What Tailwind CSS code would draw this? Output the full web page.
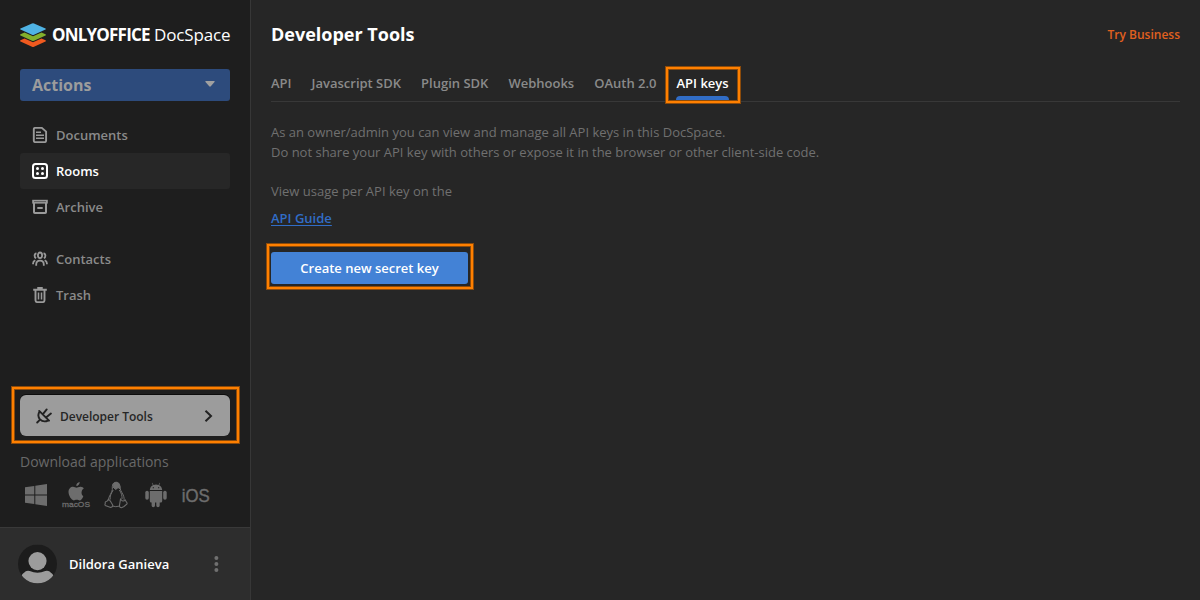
<!DOCTYPE html>
<html lang="en">
<head>
<meta charset="utf-8">
<title>Developer Tools</title>
<script src="https://cdn.jsdelivr.net/npm/@tailwindcss/browser@4"></script>
</head>
<body class="bg-[#262626] font-['Open_Sans','Noto_Sans',sans-serif] overflow-hidden">
<div class="flex w-[1200px] h-[600px] whitespace-nowrap">
  <aside class="flex flex-col w-[251px] h-full bg-[#1e1e1e] border-r border-[#373737] shrink-0">
    <div class="flex items-center h-[69px] pl-5 text-white text-[17px] leading-6">
      <svg class="w-[26px] h-6 mr-[6px] shrink-0" viewBox="0 0 26 24">
        <path fill="#f05a1f" d="M.5 17.300 4.500 15.500 13 19.200l8.500-3.700 4 1.800q.8.600 0 1.100L14 23.700q-1 .5-2 0L.5 18.400q-.8-.5 0-1.100z"/>
        <path fill="#83b02c" d="M.5 11.300 4.500 9.500 13 13.200l8.500-3.700 4 1.800q.8.600 0 1.100L14 17.700q-1 .5-2 0L.5 12.400q-.8-.5 0-1.100z"/>
        <path fill="#4fb3e4" d="M.5 5.400 12 .4q1-.5 2 0l11.500 5q.8.600 0 1.200L14 11.700q-1 .5-2 0L.5 6.600q-.8-.6 0-1.200z"/>
      </svg>
      <span class="font-bold tracking-[-0.8px] w-[102px]">ONLYOFFICE</span><span class="text-[17px] tracking-[-0.15px]">DocSpace</span>
    </div>
    <button class="flex items-center justify-between mx-5 h-8 rounded-[3px] bg-[#2d4b7c] pl-3 pr-[15px] text-[#9c9c9c] font-bold text-[16px] shrink-0">
      <span>Actions</span>
      <svg class="w-[10px] h-[6px] mb-[3px]" viewBox="0 0 10 6"><path fill="#a0a0a0" d="M.8 0h8.400q.8.200.3 1L5.800 5.300q-.8.800-1.600 0L.5 1Q0 .2.800 0z"/></svg>
    </button>
    <nav class="flex flex-col mt-4 mx-5 text-[13px] font-semibold text-[#8a8a8a]">
      <a class="flex items-center gap-2 h-9 pl-3">
        <svg class="w-4 h-4" viewBox="0 0 16 16" fill="none" stroke="#9a9a9a" stroke-width="1.900"><path d="M3.200.9h6.600l4.300 3.700v9.100q0 1.400-1.400 1.400H3.200q-1.400 0-1.400-1.400V2.300Q1.800.9 3.200.9z"/><path d="M4 5.300h5M4 8.200h8M4 11.200h8" stroke-width="1.600"/></svg>
        <span class="pt-[2px]">Documents</span></a>
      <a class="flex items-center gap-2 h-9 pl-3 rounded-[3px] bg-[#272727] text-white">
        <svg class="w-4 h-4" viewBox="0 0 16 16" fill="#fff"><rect x="1" y="1" width="14" height="14" rx="2.500" fill="none" stroke="#fff" stroke-width="2"/><circle cx="5.500" cy="5.500" r="1.500"/><circle cx="10.500" cy="5.500" r="1.500"/><circle cx="5.500" cy="10.500" r="1.500"/><circle cx="10.500" cy="10.500" r="1.500"/></svg>
        <span class="pt-[2px]">Rooms</span></a>
      <a class="flex items-center gap-2 h-9 pl-3">
        <svg class="w-4 h-4" viewBox="0 0 16 16" fill="none" stroke="#9a9a9a" stroke-width="2"><path stroke-width="3.800" d="M.2 2.700h15.600"/><path stroke="#1e1e1e" stroke-width=".5" d="M2 2.600h12"/><path d="M2 4v9.300q0 .8.800.8h10.400q.8 0 .8-.8V4M5.300 9h5.400"/></svg>
        <span class="pt-[2px]">Archive</span></a>
      <a class="flex items-center gap-2 h-9 pl-3 mt-4">
        <svg class="w-4 h-4" viewBox="0 0 16 16" fill="none" stroke="#9a9a9a" stroke-width="1.800"><ellipse cx="8" cy="4.300" rx="2.100" ry="2.800"/><path d="M4.200 14.800v-1.200q0-4 3.800-4t3.800 4v1.200M4.500 2.300Q2.600 2.600 2.600 4.700q0 1.800 1.500 2.600M11.500 2.300q1.900.3 1.900 2.400 0 1.800-1.500 2.600M1.100 13.200v-1q0-2 2.200-3M14.900 13.200v-1q0-2-2.200-3"/></svg>
        <span class="pt-[2px]">Contacts</span></a>
      <a class="flex items-center gap-2 h-9 pl-3">
        <svg class="w-4 h-4" viewBox="0 0 16 16" fill="none" stroke="#9a9a9a" stroke-width="1.900"><path d="M1.200 2.700h13.600M6.200 2V1h3.600v1M3.500 3.300v9.900q0 1.900 1.900 1.900h5.200q1.900 0 1.900-1.900V3.300"/><path stroke-width="1.500" d="M6.500 5.600v7M9.500 5.600v7"/></svg>
        <span class="pt-[2px]">Trash</span></a>
    </nav>
    <div class="relative mt-[82px] mx-5 pb-px">
      <a class="flex items-center h-[41px] rounded-md bg-[#9c9c9c] text-[#262626] text-[12px] font-semibold pl-4 pr-[17px] shadow-[0_-1px_0_0_#0c0c0c]">
        <svg class="w-4 h-4 mr-2" viewBox="0 0 16 16" fill="none" stroke="#222" stroke-width="1.900" stroke-linecap="round"><path d="M3.200 2.900 13 12.700M3.600 3.500C2 6 2 9 4 11.300c2.200 2.300 5.500 2.500 8.300 1M3.800 11.900l-2.600 2.600M7.500 5.400l3.200-4M10.900 8.800l4-3.200"/></svg>
        <span class="pt-[3px] tracking-[-0.02px]">Developer Tools</span>
        <svg class="w-[9px] h-3 ml-auto" viewBox="0 0 9 12" fill="none" stroke="#222" stroke-width="2"><path d="M1.500.8 7 6l-5.500 5.200"/></svg>
      </a>
      <div class="absolute left-[-8px] top-[-8px] w-[227px] h-[56px] border-2 border-[#ff8000] shadow-[0_0_0_1px_#8c4b0b,inset_0_0_0_1px_#8c4b0b]"></div>
    </div>
    <p class="mt-[15px] ml-5 text-[14px] leading-5 text-[#696969]">Download applications</p>
    <div class="flex items-center mt-[7px] ml-5 gap-2 h-8 text-[#6d6d6d]">
      <svg class="w-8 h-8" viewBox="0 0 32 32" fill="currentColor"><path d="M5 8.200 14.300 6.900v8.500H5zM15.300 6.700 27 5v10.400H15.300zM5 16.400h9.300v8.600L5 23.700zM15.300 16.400H27V26.900l-11.700-1.700z"/></svg>
      <svg class="w-8 h-8" viewBox="0 0 32 32" fill="currentColor"><path d="M19.700 3c.1 2.200-1.500 3.900-3.400 4-.2-2 1.500-3.800 3.400-4zM23.300 17.200c-.9 2.500-2.300 4.200-3.700 4.200-1 0-1.500-.6-2.900-.6s-2 .6-2.900.6c-2.400 0-5.300-5-5.300-8.300 0-3.400 2.200-5.400 4.500-5.400 1.500 0 2.600 1 3.500 1s2.300-1.100 4.200-1c1.500.1 2.500.7 3.100 1.700-3.100 1.900-2.700 6.200-.5 7.800z"/><text x="2" y="27.500" font-family="Liberation Sans, sans-serif" font-size="8" stroke="currentColor" stroke-width=".3" textLength="28" lengthAdjust="spacingAndGlyphs">macOS</text></svg>
      <svg class="w-8 h-8" viewBox="0 0 32 32" fill="none" stroke="currentColor" stroke-width="1"><path d="M12.300 10.500V7.500q0-4 3.700-4t4 4c0 4 1.500 4.700 3.200 8.500 1.100 2.500 1 4 .8 5.400M12.300 10.500c0 3-3.700 6.500-4.100 11"/><path fill="currentColor" d="M13 5.500Q14 3.200 16 3.200q3.500 0 3.900 4.300l-.2 2.500-1.800-1.800-2 1.800-2.600-1.800z"/><path d="M13 8l2.700 2.500L19 8M13.200 11c-2 3.500-3.500 6-3 9.500M19.300 11c2 2.500 3 6 2.700 9M12.500 27q3 1.400 7.300 0"/><path d="M8.300 20.500q1.200-.2 2.800 2.800l1.600 2.800q.4 2-2 2.300l-5.400-1.900q-.8-.8 0-2.200-.4-1.700 1-1.800 1.300-.3 2-2zM20.500 20.200q-.5 3-1 6-.1 2.500 2 2.500l2.500-1.200 3-2.500q.5-.9-.5-1.800l-1.300-2.200q-1.200 1.500-3 .8z" stroke-width="1.100"/></svg>
      <svg class="w-8 h-8" viewBox="0 0 32 32" fill="currentColor"><path d="M9.800 12h12.400v10q0 1.500-1.500 1.500h-1v3.100a1.700 1.700 0 0 1-3.400 0v-3.100h-1.300v3.100a1.700 1.700 0 0 1-3.400 0v-3.100h-.3q-1.500 0-1.500-1.500zM9.800 11.100c.2-2.500 1.300-4 3.100-4.900l-1.100-2.200.5-.3 1.200 2.200q2.500-.9 5 0L19.700 3.700l.5.3-1.100 2.200c1.800.9 2.900 2.400 3.100 4.900z"/><rect x="5.300" y="11.700" width="3.500" height="9" rx="1.700"/><rect x="23.200" y="11.700" width="3.500" height="9" rx="1.700"/><circle cx="13.300" cy="8.700" r=".6" fill="#1e1e1e"/><circle cx="18.700" cy="8.700" r=".6" fill="#1e1e1e"/></svg>
      <svg class="w-8 h-8" viewBox="0 0 32 32" fill="currentColor"><text x="1.800" y="22.500" font-family="Liberation Sans, sans-serif" font-size="18" stroke="currentColor" stroke-width=".4" textLength="28" lengthAdjust="spacingAndGlyphs">iOS</text></svg>
    </div>
    <div class="flex items-center mt-auto h-[73px] bg-[#2d2d2d] border-t border-[#393939] pl-[18px] pr-7">
      <svg class="w-[39px] h-10 mr-3" viewBox="0 0 40 40"><defs><clipPath id="avatar"><circle cx="20" cy="20" r="20"/></clipPath></defs><g clip-path="url(#avatar)"><rect width="40" height="40" fill="#1c1c1c"/><circle cx="20" cy="17" r="9.300" fill="#9c9c9c"/><path fill="#9c9c9c" d="M3 40q-2-8 5-12.500 2-1 4-.2 8 3.400 16 0 2-.8 4 .2 7 4.500 5 12.500z"/></g></svg>
      <span class="text-white text-[13px] font-semibold pt-[2px]">Dildora Ganieva</span>
      <svg class="w-4 h-4 ml-auto mr-[-2px]" viewBox="0 0 16 16" fill="#707070"><circle cx="8.400" cy="2" r="2"/><circle cx="8.400" cy="8" r="2"/><circle cx="8.400" cy="14" r="2"/></svg>
    </div>
  </aside>
  <main class="flex-1 pl-5 pr-5">
    <header class="flex items-center justify-between h-[69px]">
      <h1 class="text-white font-bold text-[18px]">Developer Tools</h1>
      <a class="text-[#e0601f] text-[12px] font-semibold">Try Business</a>
    </header>
    <div class="flex gap-5 h-[33px] border-b border-[#383838] text-[13px] font-semibold leading-[29px] text-[#8a8a8a]">
      <span>API</span><span>Javascript SDK</span><span>Plugin SDK</span><span>Webhooks</span><span>OAuth 2.0</span>
      <span class="relative text-white">API keys
        <i class="absolute left-0 right-0 bottom-0 h-[5px] rounded-t-[4px] bg-[#316dc6]"></i>
        <b class="absolute left-[-10px] top-[-2px] w-[74px] h-9 border-2 border-[#ff8000] shadow-[0_0_0_1px_#8c4b0b,inset_0_0_0_1px_#8c4b0b]"></b>
      </span>
    </div>
    <p class="mt-5 text-[13px] leading-5 text-[#707070]">As an owner/admin you can view and manage all API keys in this DocSpace.<br>Do not share your API key with others or expose it in the browser or other client-side code.</p>
    <p class="mt-[19px] text-[13px] leading-5 text-[#707070]">View usage per API key on the</p>
    <a class="block mt-[7px] text-[13px] leading-5 font-semibold text-[#316dc6] underline underline-offset-2">API Guide</a>
    <div class="relative mt-6 w-[197px]">
      <button class="block w-full h-8 rounded-[3px] bg-[#4382d6] text-white text-[13px] font-semibold pt-[2px]">Create new secret key</button>
      <div class="absolute left-[-4px] top-[-8px] w-[206px] h-[45px] border-2 border-[#ff8000] shadow-[0_0_0_1px_#8c4b0b,inset_0_0_0_1px_#8c4b0b]"></div>
    </div>
  </main>
</div>
</body>
</html>
